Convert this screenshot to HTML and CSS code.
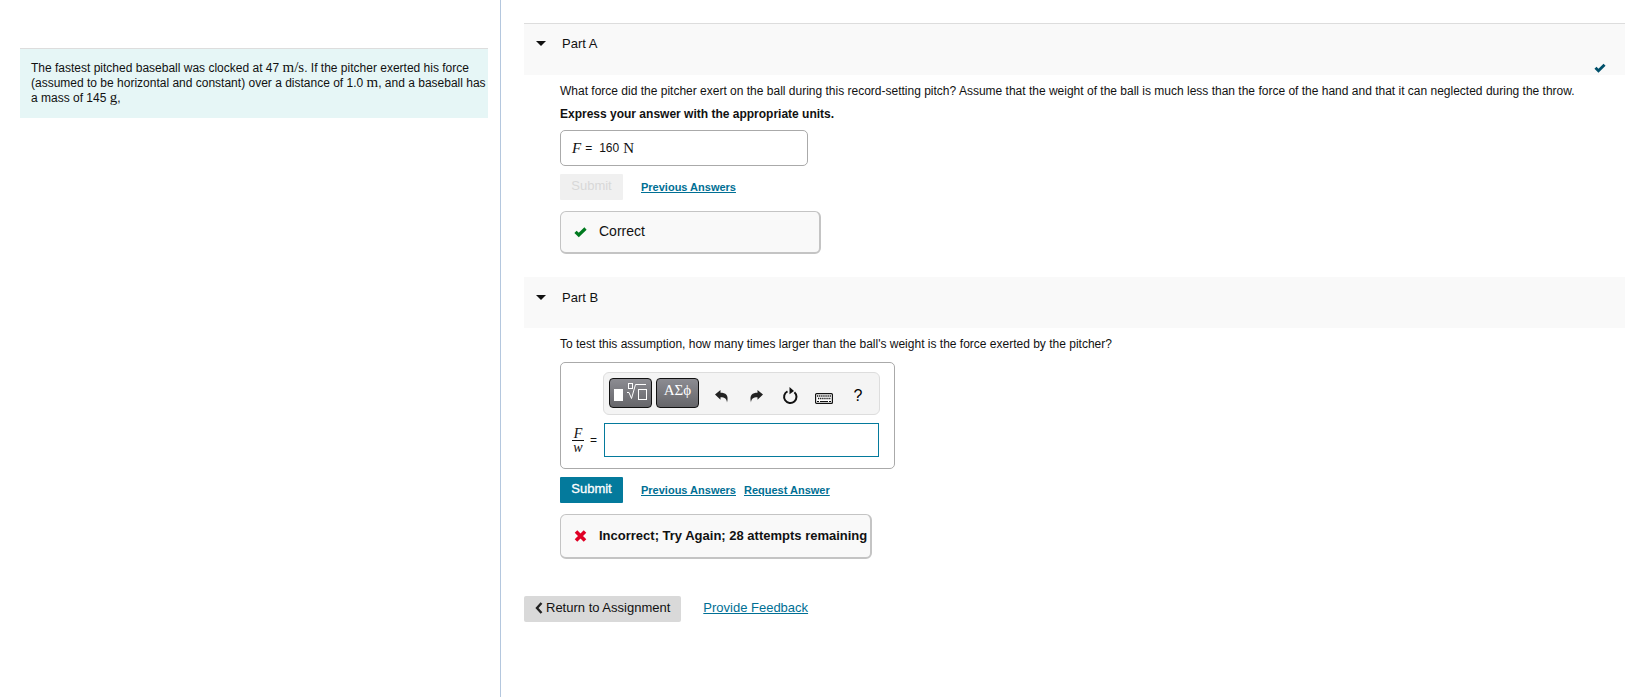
FILE: index.html
```
<!DOCTYPE html>
<html lang="en">

<head>
    <meta charset="UTF-8">
    <meta name="viewport" content="width=device-width, initial-scale=1.0">
    <title>Pitched Baseball</title>
    <link rel="stylesheet" href="styles.css">
</head>

<body>

    <aside class="intro">
        <div class="problem">
            The fastest pitched baseball was clocked at 47 <span class="math">m/s</span>. If the pitcher exerted his force (assumed to be horizontal and constant) over a distance of 1.0 <span class="math">m</span>, and a baseball has a mass of 145 <span class="math">g</span>,
        </div>
    </aside>

    <main class="parts">
        <section class="part">
            <header class="part-header first">
                <h2><span class="arrow"></span>Part A</h2>
                <svg class="done" viewBox="0 0 13 11"><path d="M1.500 5.300 4.800 8.500 11.500 2" fill="none" stroke="#00506b" stroke-width="3.200"/></svg>
            </header>
            <div class="part-body">
                <p>What force did the pitcher exert on the ball during this record-setting pitch? Assume that the weight of the ball is much less than the force of the hand and that it can neglected during the throw.</p>
                <p class="instructions">Express your answer with the appropriate units.</p>
                <div class="answer"><span class="math"><i>F</i></span><span class="eq">=</span>160 <span class="math">N</span></div>
                <div class="actions">
                    <button class="submit" disabled>Submit</button>
                    <a href="#">Previous Answers</a>
                </div>
                <div class="feedback correct">
                    <svg viewBox="0 0 13 11"><path d="M1.500 5.300 4.800 8.500 11.500 2" fill="none" stroke="#007a1f" stroke-width="3.200"/></svg>
                    <span>Correct</span>
                </div>
            </div>
        </section>

        <section class="part">
            <header class="part-header">
                <h2><span class="arrow"></span>Part B</h2>
            </header>
            <div class="part-body">
                <p>To test this assumption, how many times larger than the ball's weight is the force exerted by the pitcher?</p>
                <div class="editor">
                    <div class="toolbar">
                        <button class="palette" aria-label="Templates">
                            <svg width="33" height="20" viewBox="0 0 33 20">
                                <rect x="0" y="6" width="9" height="12" fill="#fff"/>
                                <g fill="none" stroke="#fff">
                                    <rect x="14.500" y=".5" width="4" height="5"/>
                                    <path d="M13 9.500h2l2.500 6L21.500 1.500H32"/>
                                    <rect x="24.500" y="6.500" width="8" height="10"/>
                                </g>
                            </svg>
                        </button>
                        <button class="palette greek" aria-label="Symbols">ΑΣϕ</button>
                        <div class="tools">
                            <button class="tool" aria-label="Undo">
                                <svg width="14" height="14" viewBox="0 0 14 14"><path d="M0 5.500 5.500 1v2.800c5 0 8.500 2.200 6.500 9.700-.3-3.500-2-5.300-6.500-5.300v2.600z" fill="#222"/></svg>
                            </button>
                            <button class="tool" aria-label="Redo">
                                <svg width="14" height="14" viewBox="0 0 14 14"><path d="M14 5.500 8.500 1v2.800C3.500 3.800 0 6 2 13.500c.3-3.500 2-5.300 6.500-5.300v2.600z" fill="#222"/></svg>
                            </button>
                            <button class="tool" aria-label="Reset">
                                <svg width="16" height="18" viewBox="0 0 16 18"><path d="M12.400 5.200A6.200 6.200 0 1 1 5.500 4.300" fill="none" stroke="#111" stroke-width="2"/><path d="M7.500 0 12 3.900 7.500 7.200z" fill="#111"/></svg>
                            </button>
                            <button class="tool" aria-label="Keyboard shortcuts">
                                <svg class="keyboard" width="18" height="11" viewBox="0 0 18 11"><rect x=".6" y=".6" width="16.800" height="9.800" rx="1" fill="#fff" stroke="#111" stroke-width="1.200"/><path d="M2 3h14M3 5.500h13" stroke="#111" stroke-width="1.500" stroke-dasharray="1.300 .8"/><path d="M2 8.500h2M5 8.500h8M14 8.500h2" stroke="#111"/></svg>
                            </button>
                            <button class="tool" aria-label="Help">?</button>
                        </div>
                    </div>
                    <label class="fraction" for="ratio"><span class="frac"><i class="num">F</i><i>w</i></span><span>=</span></label>
                    <input type="text" id="ratio">
                </div>
                <div class="actions">
                    <button class="submit active">Submit</button>
                    <a href="#">Previous Answers</a>
                    <a href="#">Request Answer</a>
                </div>
                <div class="feedback incorrect">
                    <svg viewBox="0 0 13 12"><path d="M2 1.500 11 10.500M11 1.500 2 10.500" stroke="#e00025" stroke-width="3.600"/></svg>
                    <span>Incorrect; Try Again; 28 attempts remaining</span>
                </div>
            </div>
        </section>

        <footer class="page-footer">
            <button class="return"><svg width="8" height="12" viewBox="0 0 8 12"><path d="M6.500 1 2 6l4.500 5" fill="none" stroke="#222" stroke-width="2.400"/></svg>Return to Assignment</button>
            <a href="#">Provide Feedback</a>
        </footer>
    </main>

</body>

</html>
```
FILE: styles.css
```
* {
    box-sizing: border-box;
}

body {
    margin: 0;
    min-height: 100vh;
    display: flex;
    font-family: "Liberation Sans", Arial, sans-serif;
    font-size: 12px;
    line-height: 15px;
    color: #111;
    background: #fff;
}

a {
    color: #006f94;
}

.intro {
    flex: 0 0 501px;
    padding: 48px 12px 0 20px;
    border-right: 1px solid #b4c7de;
}

.problem {
    padding: 12px 0 12px 11px;
    background: #e6f6f6;
    border-top: 1px solid #ddd;
}

.math {
    font-family: "Liberation Serif", "Times New Roman", serif;
    font-size: 15px;
    line-height: 1px;
}

.parts {
    flex: 1;
    padding: 23px 5px 0 23px;
}

.part-header {
    display: flex;
    justify-content: space-between;
    height: 51px;
    padding: 12px 19px 0 12px;
    background: #f9f9f9;
}

.part-header.first {
    height: 52px;
    padding-top: 11px;
    border-top: 1px solid #ddd;
}

.part-header h2 {
    display: flex;
    align-items: center;
    gap: 16px;
    height: 16px;
    margin: 0;
    font-size: 13px;
    font-weight: normal;
}

.arrow {
    border: 5px solid transparent;
    border-top-color: #111;
    border-bottom: 0;
}

.done {
    width: 12px;
    height: 10px;
    margin-top: 28px;
}

.part-body {
    padding: 9px 0 23px 36px;
}

.part-body p {
    margin: 0 0 8px;
}

.part-body .instructions {
    font-weight: bold;
}

.answer {
    display: flex;
    align-items: center;
    gap: 4px;
    width: 248px;
    height: 36px;
    padding: 0 11px;
    border: 1px solid #aaa;
    border-radius: 5px;
}

.eq {
    margin-right: 3px;
}

.actions {
    display: flex;
    align-items: center;
    gap: 8px;
    margin: 8px 0 11px;
    font-size: 11px;
    font-weight: bold;
}

.submit {
    width: 63px;
    height: 26px;
    margin-right: 10px;
    padding: 0 0 3px;
    border: 0;
    border-radius: 1px;
    background: #047a9c;
    color: #fff;
    font: 13px "Liberation Sans", Arial, sans-serif;
    cursor: pointer;
}

.submit.active {
    -webkit-text-stroke: 0.3px #fff;
}

.submit:disabled {
    background: #f0f0f0;
    color: #d8d8d8;
    cursor: default;
}

.feedback {
    display: flex;
    align-items: center;
    gap: 12px;
    width: 261px;
    height: 43px;
    padding: 0 4px 1px 13px;
    border: 1px solid #c4c4c4;
    border-right-width: 2px;
    border-bottom-width: 2px;
    border-radius: 6px;
    background: #f9f9f9;
    font-size: 14px;
}

.feedback svg {
    flex: none;
    width: 13px;
    height: 12px;
}

.feedback.incorrect {
    width: 312px;
    height: 45px;
    font-size: 13px;
    font-weight: bold;
    white-space: nowrap;
}

.editor {
    display: grid;
    grid-template-columns: 32px 277px;
    justify-content: start;
    row-gap: 8px;
    width: 335px;
    padding: 9px 10px 11px;
    border: 1px solid #aaa;
    border-radius: 5px;
}

.part-body p + .editor {
    margin-top: 10px;
}

.toolbar {
    grid-column: 2;
    display: flex;
    gap: 4px;
    height: 43px;
    padding: 5px;
    border: 1px solid #ddd;
    border-radius: 6px;
    background: #f4f4f4;
}

.toolbar button {
    display: flex;
    align-items: center;
    justify-content: center;
    padding: 0;
    cursor: pointer;
}

.palette {
    width: 43px;
    height: 30px;
    border: 1px solid #111;
    border-radius: 4px;
    background: linear-gradient(#8c8c92, #66666a);
    color: #fff;
}

.toolbar .greek {
    padding-bottom: 5px;
    font: 15px "Liberation Serif", "Times New Roman", serif;
}

.tools {
    display: flex;
    gap: 4px;
    margin-left: 4px;
}

.tool {
    width: 30px;
    height: 36px;
    border: 0;
    background: none;
    font: 16px "Liberation Sans", Arial, sans-serif;
}

.keyboard {
    margin-top: 4px;
}

.fraction {
    display: flex;
    align-items: center;
    gap: 6px;
    padding-left: 1px;
}

.frac {
    display: flex;
    flex-direction: column;
    width: 12px;
    text-align: center;
    font: 14px/13px "Liberation Serif", "Times New Roman", serif;
}

.num {
    border-bottom: 1px solid #111;
}

.editor input {
    width: 275px;
    height: 34px;
    margin-left: 1px;
    border: 1px solid #047a9c;
    font-size: 14px;
    outline: 0;
}

.page-footer {
    display: flex;
    align-items: center;
    gap: 22px;
    margin-top: 14px;
    font-size: 13px;
}

.return {
    display: flex;
    align-items: center;
    gap: 3px;
    height: 26px;
    padding: 0 11px 3px;
    border: 0;
    border-radius: 2px;
    background: #d9d9d9;
    color: #111;
    font: 13px "Liberation Sans", Arial, sans-serif;
    cursor: pointer;
}

.page-footer a {
    padding-bottom: 3px;
}
```
